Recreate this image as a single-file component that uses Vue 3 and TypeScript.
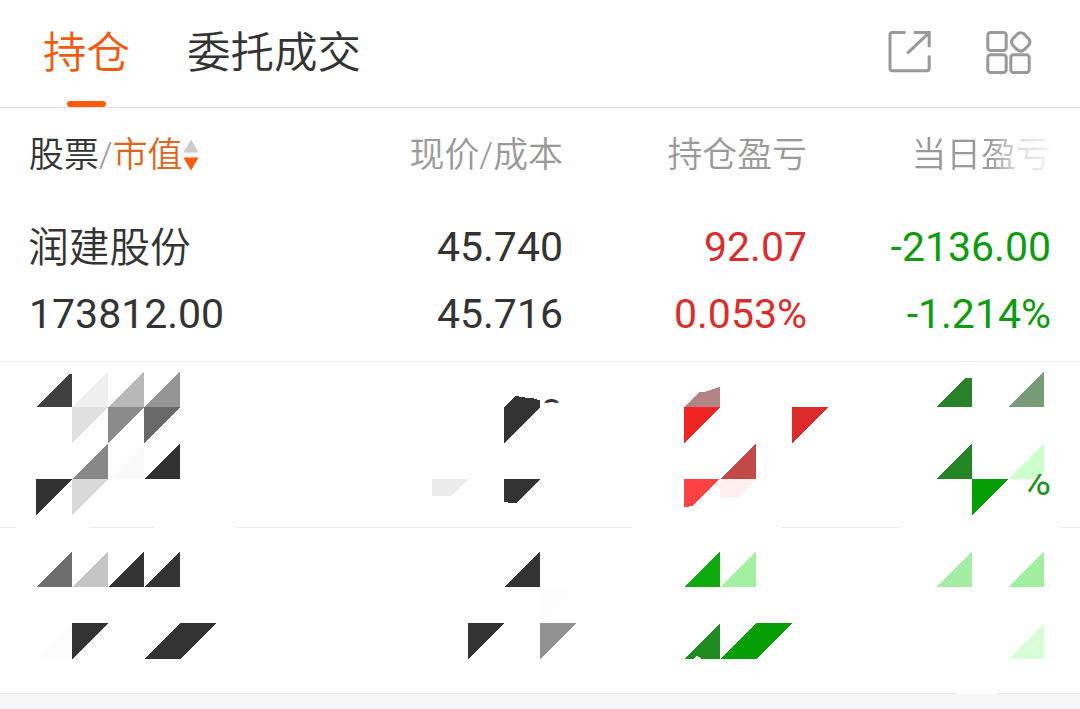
<script setup lang="ts">
import { ref } from 'vue'

interface Shape {
  points: string
  fill: string
}

const tabs = ['持仓', '委托成交']
const active = ref(0)

const holding = {
  name: '润建股份',
  value: '173812.00',
  price: '45.740',
  cost: '45.716',
  profit: '92.07',
  profitRate: '0.053%',
  today: '-2136.00',
  todayRate: '-1.214%'
}

const CELL = 36

// lower right half of a mosaic cell
const lower = (x: number, y: number, fill: string): Shape => ({
  points: `${x},${y + CELL} ${x + CELL},${y} ${x + CELL},${y + CELL}`,
  fill
})
// upper left half of a mosaic cell
const upper = (x: number, y: number, fill: string): Shape => ({
  points: `${x},${y} ${x + CELL},${y} ${x},${y + CELL}`,
  fill
})
const poly = (points: string, fill: string): Shape => ({ points, fill })

const firstHidden: Shape[] = [
  poly('36,45 69,12 72,12 72,45', '#404040'),
  lower(72, 9, '#efefef'),
  lower(108, 9, '#b9b9b9'),
  lower(144, 9, '#959595'),
  upper(72, 45, '#e0e0e0'),
  upper(108, 45, '#8b8b8b'),
  upper(144, 45, '#696969'),
  lower(72, 81, '#878787'),
  lower(108, 81, '#fbfbfb'),
  lower(144, 81, '#323232'),
  upper(36, 117, '#323232'),
  upper(72, 117, '#d9d9d9'),
  poly('504,45 515.5,34 525,35.5 531,35.5 540,38.5 540,45 504,81', '#333'),
  poly('432,117 468,117 450.5,134.5 432,133.5', '#ececec'),
  poly('504,117 540,117 516,141.5 504,140', '#333'),
  poly('684,45 699.5,30 706,29.5 720,25 720,45', '#b38484'),
  upper(684, 45, '#f12424'),
  upper(792, 45, '#dc2b2b'),
  lower(720, 81, '#c34949'),
  poly('684,117 720,117 693,143.5 684,145.5', '#ff4343'),
  poly('720,117 756,117 738,135 720,136', '#ffefef'),
  poly('936,45 964.5,16.5 972,16 972,45', '#298229'),
  lower(1008, 9, '#789b78'),
  lower(936, 81, '#248524'),
  poly('1008,117 1044,81 1044,112 1040,112 1033,117', '#ccffcc'),
  upper(972, 117, '#059e05')
]

const secondHidden: Shape[] = [
  lower(36, 23, '#6e6e6e'),
  lower(72, 23, '#c5c5c5'),
  lower(108, 23, '#333'),
  lower(144, 23, '#333'),
  lower(36, 95, '#fcfcfc'),
  upper(72, 95, '#333'),
  poly('144,131 180,95 216,95 180,131', '#333'),
  lower(504, 23, '#333'),
  upper(540, 59, '#fdfdfd'),
  upper(468, 95, '#333'),
  upper(540, 95, '#929292'),
  lower(684, 23, '#0da90d'),
  lower(720, 23, '#a3f0a3'),
  poly('684,131 720,95 720,131 701,131 699,129 697,127.5 695,130 693,131', '#208b20'),
  poly('720,131 756,95 792,95 756,131', '#059e05'),
  lower(936, 23, '#a5eca5'),
  lower(1008, 23, '#a0eea0'),
  lower(1008, 95, '#d9ffd9')
]

// visible pieces of the separator under the first hidden row
const separators = [
  [0, 16],
  [89, 155],
  [236, 632],
  [782, 900],
  [1060, 1080]
]
</script>

<template>
  <div class="page">
    <header class="tabs">
      <nav>
        <button
          v-for="(tab, i) in tabs"
          :key="tab"
          class="tab"
          :class="{ active: active === i }"
          @click="active = i"
        >
          {{ tab }}
        </button>
      </nav>
      <div class="tools">
        <svg width="44" height="44" viewBox="888 30 44 44" class="icon">
          <path d="M905.5 32.4H892.5Q890 32.4 890 34.9V68.2Q890 70.7 892.5 70.7H926.7Q929.2 70.7 929.2 68.2V55.5" />
          <path d="M913.7 32.4H929.2V47.3M929 32.8L907.3 53.3" />
        </svg>
        <svg width="48" height="46" viewBox="985 30 48 46" class="icon">
          <rect x="987.8" y="32.4" width="18.4" height="18.2" rx="2.8" />
          <rect x="987.8" y="54.8" width="18.4" height="17.8" rx="2.8" />
          <rect x="1010.8" y="54.8" width="18.4" height="17.8" rx="2.8" />
          <path d="M1017.3 34Q1020.7 31.4 1024.1 34L1028.6 38.8Q1031.2 42 1028.6 45.2L1024.1 49.8Q1020.7 52.4 1017.3 49.8L1012.8 45.2Q1010.2 42 1012.8 38.8Z" />
        </svg>
      </div>
    </header>

    <div class="row head">
      <div class="cell first">
        <span class="dark">股票</span>/<span class="orange">市值</span>
        <svg class="sort" width="16" height="32" viewBox="0 0 16 32">
          <path d="M8 0.5L15.6 13.5H0.4Z" fill="#ccc" />
          <path d="M0.4 18.5H15.6L8 31.5Z" fill="#f95d0c" />
        </svg>
      </div>
      <div class="cell">现价/成本</div>
      <div class="cell">持仓盈亏</div>
      <div class="cell fade">当日盈亏</div>
    </div>

    <div class="row holding">
      <div class="cell first">
        <p class="name">{{ holding.name }}</p>
        <p>{{ holding.value }}</p>
      </div>
      <div class="cell">
        <p>{{ holding.price }}</p>
        <p>{{ holding.cost }}</p>
      </div>
      <div class="cell up">
        <p>{{ holding.profit }}</p>
        <p>{{ holding.profitRate }}</p>
      </div>
      <div class="cell down">
        <p>{{ holding.today }}</p>
        <p>{{ holding.todayRate }}</p>
      </div>
    </div>

    <svg class="hidden-row" width="1080" height="166" viewBox="0 0 1080 166">
      <defs>
        <clipPath id="digit"><rect x="544" y="30" width="16.5" height="10.8" /></clipPath>
        <clipPath id="percent"><path d="M1037 112H1054V140H1027V123Z" /></clipPath>
      </defs>
      <g shape-rendering="crispEdges">
        <polygon v-for="(s, i) in firstHidden" :key="i" :points="s.points" :fill="s.fill" />
      </g>
      <text x="563" y="65.5" fill="#333" clip-path="url(#digit)">0</text>
      <text x="1051" y="132.5" fill="#1f911f" clip-path="url(#percent)">%</text>
      <rect v-for="[from, to] in separators" :key="from" :x="from" y="165" :width="to - from" height="1" fill="#ebebeb" />
    </svg>

    <svg class="hidden-row" width="1080" height="166" viewBox="0 0 1080 166">
      <g shape-rendering="crispEdges">
        <polygon v-for="(s, i) in secondHidden" :key="i" :points="s.points" :fill="s.fill" />
      </g>
      <rect y="165" width="1080" height="1" fill="#e8e8e8" />
      <ellipse cx="977" cy="163.5" rx="24" ry="4" fill="#fefefe" />
    </svg>
    <footer></footer>
  </div>
</template>

<style>
body {
  margin: 0;
  background: #fefefe;
}
</style>

<style scoped>
.page {
  width: 1080px;
  height: 709px;
  overflow: hidden;
  display: flex;
  flex-direction: column;
  background: #fefefe;
  color: #333;
  font-family: Roboto, 'Noto Sans CJK SC', sans-serif;
}
.tabs {
  box-sizing: border-box;
  height: 108px;
  flex: none;
  display: flex;
  justify-content: space-between;
  padding: 0 47px 0 43px;
  border-bottom: 1px solid #ddd;
}
nav {
  display: flex;
  gap: 57px;
}
.tab {
  position: relative;
  height: 107px;
  padding: 0 0 7px;
  border: none;
  background: transparent;
  color: #333;
  font-family: 'Noto Sans CJK SC', sans-serif;
  font-weight: 350;
  font-size: 43.5px;
  line-height: 100px;
}
.tab.active {
  color: #ee5c10;
}
.tab.active::after {
  content: '';
  position: absolute;
  left: 50%;
  bottom: 0;
  width: 39px;
  height: 6px;
  margin-left: -19.5px;
  border-radius: 3px;
  background: #f95d0c;
}
.tools {
  display: flex;
  gap: 53px;
  padding-top: 30px;
}
.icon {
  fill: none;
  stroke: #999;
  stroke-width: 3;
}
.row {
  box-sizing: border-box;
  flex: none;
  display: grid;
  grid-template-columns: 290px 244px 244px 244px;
  padding-left: 29px;
}
.cell {
  text-align: right;
}
.first {
  text-align: left;
}
.head {
  height: 88px;
  color: #999;
  font-size: 34.9px;
  font-weight: 350;
  line-height: 95px;
}
.head .first {
  display: flex;
  align-items: center;
  height: 94px;
}
.sort {
  margin-left: 1px;
}
.dark {
  color: #333;
}
.orange {
  color: #dd651c;
}
.fade {
  mask-image: linear-gradient(to right, #000 182px, rgba(0, 0, 0, 0.35) 212px, rgba(0, 0, 0, 0.12) 240px);
}
.holding {
  height: 166px;
  padding-top: 18px;
  border-bottom: 1px solid #ebebeb;
  font-size: 41px;
}
.holding p {
  margin: 0;
  height: 67px;
  line-height: 67px;
}
.holding .name {
  margin-left: -1px;
  font-size: 40.7px;
  font-weight: 350;
  line-height: 69px;
}
.hidden-row {
  display: block;
  flex: none;
}
.hidden-row text {
  font-size: 41px;
  text-anchor: end;
}
.up {
  color: #d92e2e;
}
.down {
  color: #0f9b0f;
}
footer {
  flex: 1;
  background: #f5f7f9;
}
</style>
